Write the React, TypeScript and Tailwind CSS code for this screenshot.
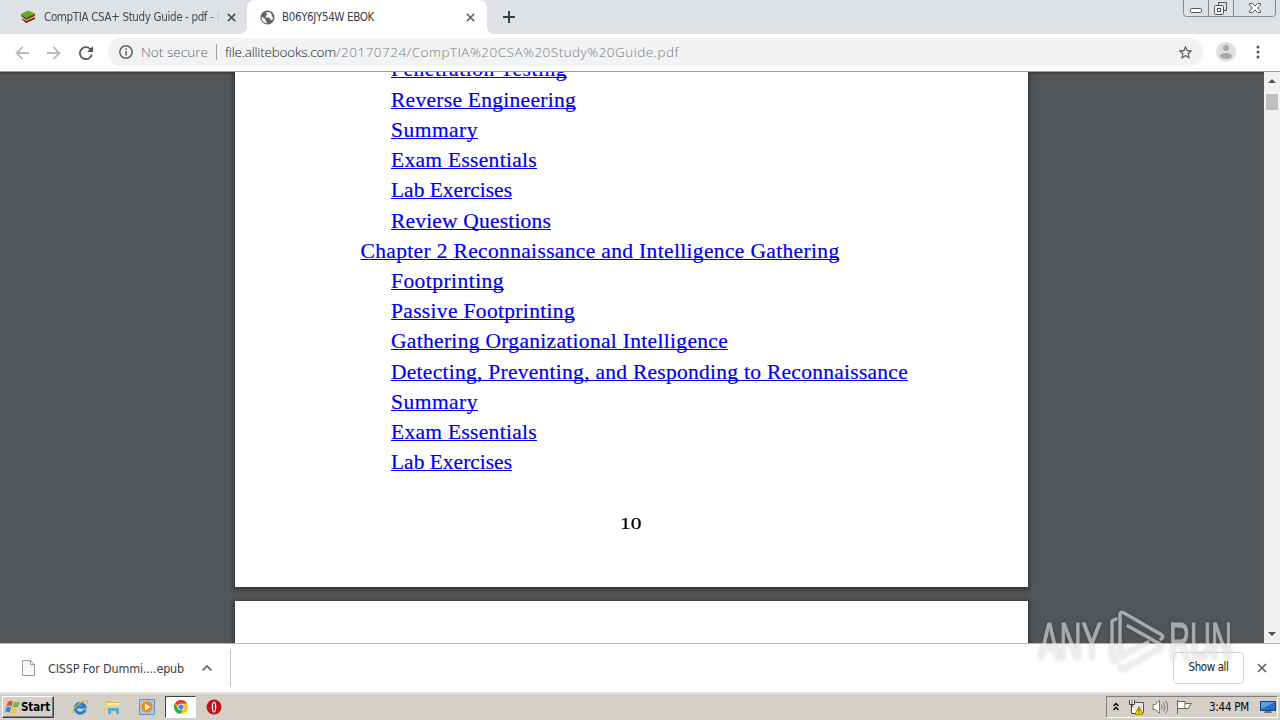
import React, { useLayoutEffect, useRef, useState } from 'react';

interface FitProps {
  text: string;
  width: number;
  className?: string;
}

// Spreads or tightens the letters so the text takes exactly the given width
function Fit({ text, width, className = '' }: FitProps) {
  const ref = useRef<HTMLSpanElement>(null);
  const [spacing, setSpacing] = useState(0);

  useLayoutEffect(() => {
    if (ref.current) {
      setSpacing((width - ref.current.getBoundingClientRect().width) / text.length);
    }
  }, []);

  return (
    <span ref={ref} className={`inline-block whitespace-pre ${className}`} style={{ letterSpacing: spacing }}>
      {text}
    </span>
  );
}

const links = [
  { text: 'Penetration Testing', width: 176 },
  { text: 'Reverse Engineering', width: 185 },
  { text: 'Summary', width: 87 },
  { text: 'Exam Essentials', width: 146 },
  { text: 'Lab Exercises', width: 121 },
  { text: 'Review Questions', width: 160 },
  { text: 'Chapter 2 Reconnaissance and Intelligence Gathering', width: 479, chapter: true },
  { text: 'Footprinting', width: 113 },
  { text: 'Passive Footprinting', width: 184 },
  { text: 'Gathering Organizational Intelligence', width: 337 },
  { text: 'Detecting, Preventing, and Responding to Reconnaissance', width: 517 },
  { text: 'Summary', width: 87 },
  { text: 'Exam Essentials', width: 146 },
  { text: 'Lab Exercises', width: 121 },
];

function Cross({ className }: { className: string }) {
  return (
    <svg viewBox="0 0 10 10" className={className} fill="none" stroke="currentColor" strokeWidth="1.7">
      <path d="M1 1l8 8M9 1L1 9" />
    </svg>
  );
}

function TabStrip() {
  return (
    <div className="flex h-[34px] bg-[#dee1e6]">
      <div className="flex h-full w-[247px] items-center pl-5">
        <svg viewBox="0 0 16 14" className="h-[14px] w-4 shrink-0">
          <path d="M1 8.500l5 4.500 9-4V7L6 10z" fill="#7a1c12" />
          <path d="M1 7l5 4 9-4V5L6 8z" fill="#e8d9b8" />
          <path d="M1 6l5 4 9-4V4L6 7z" fill="#8b2a14" />
          <path d="M1 4l7-3.500 7 3-9 4.500z" fill="#6cab1e" />
          <path d="M1 4v2l5 3 9-4V3.500L6 8z" fill="#3f7a12" />
        </svg>
        <div className="mt-[2px] ml-2 flex w-[176px] overflow-hidden [mask-image:linear-gradient(to_right,#000_93%,transparent)]">
          <Fit text="CompTIA CSA+ Study Guide - pdf - F" width={178} className="shrink-0 font-['DejaVu_Sans_Condensed','DejaVu_Sans',sans-serif] text-[11.500px] text-[#45494d]" />
        </div>
        <Cross className="ml-[7px] h-[9px] w-[9px] text-[#4a4d51]" />
      </div>
      <div className="relative flex h-full w-[240px] items-center rounded-t-lg bg-white pl-[13px]">
        <svg viewBox="0 0 16 16" className="h-[15px] w-[15px]">
          <circle cx="8" cy="8" r="7.500" fill="#5f6368" />
          <path d="M2 7l4 3v2l2 2c-4 .5-7-3-6-7zM6 3l4-1 3 3-1 1 2 2-1 3-2-1V9L9 8H6V6l2-1z" fill="#fff" />
        </svg>
        <Fit text="B06Y6JY54W EBOK" width={92} className="mt-[2px] ml-[7px] font-['DejaVu_Sans_Condensed','DejaVu_Sans',sans-serif] text-[11.500px] text-[#3c4043]" />
        <Cross className="ml-[92px] h-[9px] w-[9px] text-[#5f6368]" />
        <div className="absolute bottom-0 -left-2 h-2 w-2 bg-[radial-gradient(circle_at_0_0,transparent_8px,#fff_8px)]" />
        <div className="absolute -right-2 bottom-0 h-2 w-2 bg-[radial-gradient(circle_at_100%_0,transparent_8px,#fff_8px)]" />
      </div>
      <svg viewBox="0 0 12 12" className="mt-[11px] ml-4 h-3 w-3" stroke="#3c4043" strokeWidth="2">
        <path d="M6 0v12M0 6h12" />
      </svg>
      <svg viewBox="0 0 93 17" className="ml-auto mr-1 h-[17px] w-[93px]" fill="none" stroke="#84898f">
        <path d="M.5 0v13.500q0 3 3 3h86q3 0 3-3V0M25.500 0v16M50.500 0v16" />
        <rect x="7.500" y="8.500" width="11" height="4" rx="1" stroke="#50545b" fill="#fff" />
        <path d="M35.500 5V2.500h8v8H41" stroke="#50545b" />
        <rect x="31.500" y="5.500" width="9" height="9" rx="1" stroke="#50545b" fill="#f1f2f4" />
        <rect x="34.500" y="8.500" width="3" height="3" stroke="#50545b" />
        <path d="M66.500 3.500h3l2.500 2.500 2.500-2.500h3v1.500L74.500 8l3 3v1.500h-3L72 10l-2.500 2.500h-3V11l3-3-3-3z" stroke="#50545b" fill="#fff" />
      </svg>
    </div>
  );
}

function Toolbar() {
  return (
    <div className="flex h-[38px] items-center border-b border-[#9b9b9b] bg-white">
      <div className="flex items-center pl-[15px]">
        <svg viewBox="0 0 14 14" className="h-[14px] w-[14px]" fill="none" stroke="#babcbe" strokeWidth="1.800">
          <path d="M14 7H1.500M7.500 1l-6 6 6 6" />
        </svg>
        <svg viewBox="0 0 14 14" className="ml-[18px] h-[14px] w-[14px]" fill="none" stroke="#babcbe" strokeWidth="1.800">
          <path d="M0 7h12.500M6.500 1l6 6-6 6" />
        </svg>
        <svg viewBox="0 0 14 14" className="ml-[18px] h-[14px] w-[14px]" fill="none" stroke="#54585c" strokeWidth="1.800">
          <path d="M12.800 8.500A6 6 0 1 1 11 2.700l1.500 1.500" />
          <path d="M14 0v6H8z" fill="#54585c" stroke="none" />
        </svg>
      </div>
      <div className="-mt-px ml-[15px] flex h-7 w-[1095px] items-center rounded-full bg-[#f1f3f4] pl-[11px] font-['Open_Sans','Noto_Sans',sans-serif] text-[13.500px] font-light">
        <svg viewBox="0 0 14 14" className="h-[14px] w-[14px]" fill="none" stroke="#5f6368" strokeWidth="1.500">
          <circle cx="7" cy="7" r="6.200" />
          <path d="M7 6v4.500M7 3.300v1.500" />
        </svg>
        <Fit text="Not secure" width={67} className="ml-2 text-[#5f6368]" />
        <div className="mx-2 h-4 w-px bg-[#9aa0a6]" />
        <Fit text="file.allitebooks.com" width={111} className="text-[#202124]" />
        <Fit text="/20170724/CompTIA%20CSA%20Study%20Guide.pdf" width={343} className="text-[#777c81]" />
        <svg viewBox="0 0 24 24" className="ml-auto mr-[9px] h-[17px] w-[17px]" fill="#54585c">
          <path d="M22 9.240l-7.190-.62L12 2 9.190 8.630 2 9.240l5.460 4.730L5.820 21 12 17.270 18.180 21l-1.630-7.030zM12 15.400l-3.760 2.270 1-4.280-3.320-2.880 4.380-.38L12 6.100l1.710 4.040 4.380.38-3.320 2.880 1 4.280z" />
        </svg>
      </div>
      <svg viewBox="0 0 20 20" className="-mt-px ml-[13px] h-5 w-5">
        <circle cx="10" cy="10" r="10" fill="#dedfe0" />
        <circle cx="10" cy="6" r="3" fill="#a5a7a9" />
        <ellipse cx="10" cy="14" rx="6" ry="3" fill="#a5a7a9" />
      </svg>
      <svg viewBox="0 0 4 14" className="-mt-px ml-5 h-[14px] w-1" fill="#54585c">
        <circle cx="2" cy="2" r="1.500" />
        <circle cx="2" cy="7" r="1.500" />
        <circle cx="2" cy="12" r="1.500" />
      </svg>
    </div>
  );
}

function Viewer() {
  return (
    <div className="flex h-[571px] bg-[#525659]">
      <div className="flex flex-1 flex-col overflow-hidden pl-[235px] shadow-[inset_0_4px_3px_-3px_rgba(0,0,0,0.4)]">
        <div className="h-[515px] w-[793px] shrink-0 overflow-hidden bg-white shadow-[0_1px_4px_2px_rgba(0,0,0,0.35)]">
          <div className="-mt-[17.600px] font-['Liberation_Serif',serif] text-[21.500px] leading-[30.230px]">
            {links.map((link, i) => (
              <div key={i} className={`h-[30.230px] ${link.chapter ? 'pl-[125.500px]' : 'pl-[156px]'}`}>
                <a className="text-[#0000ee] [-webkit-text-stroke:0.200px_#0000ee]">
                  <Fit text={link.text} width={link.width} className="underline decoration-1 underline-offset-1 [text-decoration-skip-ink:none]" />
                </a>
              </div>
            ))}
            <div className="mt-[32px] ml-[385px] w-4 origin-left scale-x-135 text-[16px] leading-[30px] text-black [-webkit-text-stroke:0.200px_#000]">
              10
            </div>
          </div>
        </div>
        <div className="mt-[14px] h-[60px] w-[793px] shrink-0 bg-white shadow-[0_1px_4px_2px_rgba(0,0,0,0.35)]" />
      </div>
      <div className="flex w-4 flex-col items-center bg-[#f1f1f1]">
        <svg viewBox="0 0 8 4" className="mt-[7px] h-1 w-2" fill="#505050">
          <path d="M0 4l4-4 4 4z" />
        </svg>
        <div className="mt-[11px] h-4 w-3 bg-[#c1c1c1]" />
        <svg viewBox="0 0 8 4" className="mt-auto mb-[7px] h-1 w-2" fill="#505050">
          <path d="M0 0l4 4 4-4z" />
        </svg>
      </div>
    </div>
  );
}

function DownloadShelf() {
  return (
    <div className="flex h-[49px] items-center border-t border-[#b5b5b5] bg-white font-['DejaVu_Sans_Condensed','DejaVu_Sans',sans-serif]">
      <div className="flex h-[38px] w-[231px] items-center border-r border-[#c8c8c8] pl-[22px]">
        <svg viewBox="0 0 13 16" className="-mt-px h-4 w-[13px]" fill="#f8f8f8" stroke="#9a9a9a">
          <path d="M.5.5h8l4 4v11H.5zM8.500.5v4h4" />
        </svg>
        <Fit text="CISSP For Dummi....epub" width={136} className="mt-[3px] ml-[13px] text-[12.500px] text-[#3c4043]" />
        <svg viewBox="0 0 10 6" className="ml-[18px] h-[6px] w-[10px]" fill="none" stroke="#6b6e72" strokeWidth="1.800">
          <path d="M.5 5.500L5 1l4.500 4.500" />
        </svg>
      </div>
      <div className="ml-auto flex h-8 w-[71px] items-center justify-center rounded border border-[#d5d7da] bg-white">
        <Fit text="Show all" width={40} className="text-[11.500px] text-[#202124]" />
      </div>
      <Cross className="mr-[13px] ml-[13px] h-[10px] w-[10px] text-[#5f6368]" />
    </div>
  );
}

function Taskbar() {
  return (
    <div className="flex h-[28px] items-center border-t-2 border-t-[#e4e1dc] bg-[#d4d0c8] font-['DejaVu_Sans_Condensed','DejaVu_Sans',sans-serif]">
      <div className="ml-[2px] flex h-[22px] w-[52px] items-center border border-t-white border-r-[#404040] border-b-[#404040] border-l-white pl-[2px] shadow-[inset_-1px_-1px_0_#808080]">
        <svg viewBox="0 0 16 16" className="h-[15px] w-[15px] shrink-0">
          <path d="M3 2q3-2 5.500-.5L7 7Q4.500 5.500 1.500 7z" fill="#e8522a" />
          <path d="M9.500 2q3 1 6 0L14 7.500q-3 1-6 0z" fill="#71b943" />
          <path d="M1.200 8Q4 6.500 6.700 8L5 13.500Q3 12 0 13z" fill="#3a88d8" />
          <path d="M7.500 8.500q3 1.500 6 .3L12 14q-3 1.500-6-.5z" fill="#fbc62d" />
        </svg>
        <Fit text="Start" width={29} className="mt-px ml-px text-[11.500px] font-bold text-black" />
      </div>
      <svg viewBox="0 0 16 16" className="ml-[18px] h-4 w-4" fill="none">
        <path d="M13 10.500A5 5 0 1 1 13 8H4" stroke="#1c7fd0" strokeWidth="3" />
        <path d="M1 14C-1 11 10 0 15 2q1 1-.5 3.500" stroke="#e5ba35" strokeWidth="1.300" />
      </svg>
      <svg viewBox="0 0 16 16" className="ml-[17px] h-4 w-4">
        <path d="M1 2h5l1 1h7v11H1z" fill="#e0bd50" />
        <path d="M2 4h12v3H2z" fill="#fff4b8" />
        <path d="M1 6h14v8H1z" fill="#f0d678" />
        <path d="M3 15V9h11v6h-3v-3H6v3z" fill="#58a9df" />
      </svg>
      <svg viewBox="0 0 16 16" className="ml-[18px] h-4 w-4">
        <path d="M.5.5h15v15H.5z" fill="#a8cbec" stroke="#5b94c9" />
        <circle cx="8" cy="8" r="5.800" fill="#f18b16" />
        <path d="M6 4.500v7L11.500 8z" fill="#fff" />
      </svg>
      <div className="ml-[10px] flex h-[22px] w-[31px] items-center justify-center border border-t-[#404040] border-r-white border-b-white border-l-[#404040] bg-white">
        <svg viewBox="0 0 16 16" className="h-[14px] w-[14px]">
          <circle cx="8" cy="8" r="8" fill="#fbc116" />
          <path d="M8 8L1.070 4A8 8 0 0 1 14.930 4H8z" fill="#e33b2e" />
          <path d="M1.070 4A8 8 0 0 0 7 15.940L10.500 10 8 8 4.500 10z" fill="#2da94f" />
          <circle cx="8" cy="8" r="3.800" fill="#fff" />
          <circle cx="8" cy="8" r="3" fill="#4285f4" />
        </svg>
      </div>
      <svg viewBox="0 0 16 16" className="ml-[10px] h-4 w-4">
        <circle cx="8" cy="8" r="7.500" fill="#bd1017" />
        <ellipse cx="8" cy="8" rx="2.300" ry="5.500" fill="#fff" />
        <ellipse cx="8" cy="8" rx=".9" ry="4.500" fill="#9d0b12" />
      </svg>
      <div className="ml-auto mr-[2px] flex h-[22px] w-[172px] items-center border border-t-[#808080] border-r-white border-b-white border-l-[#808080]">
        <svg viewBox="0 0 6 9" className="-mt-[2px] ml-[6px] h-[9px] w-[6px]" fill="none" stroke="#000" strokeWidth="1.400">
          <path d="M.5 4L3 1.500 5.500 4M.5 8L3 5.500 5.500 8" />
        </svg>
        <svg viewBox="0 0 16 15" className="ml-[9px] h-[15px] w-4">
          <path d="M4.500 2.500h11v10h-11z" fill="#e8e8e8" stroke="#555" />
          <path d="M1.500 0v4.500h5V0M4 0v4M3.500 5v8.500H8" fill="#fff" stroke="#444" />
          <path d="M11 6.500l4 8H7z" fill="#ffe100" stroke="#a89000" />
          <path d="M11 9v2.500M11 12.500v1" stroke="#222" />
        </svg>
        <svg viewBox="0 0 17 14" className="ml-[8px] h-[14px] w-[17px]" fill="none" stroke="#777">
          <path d="M1 4.500h2.500l4-4v13l-4-4H1z" fill="#fff" />
          <path d="M9.500 4.500q1.500 2.500 0 5M11.500 2.500q3 4.500 0 9M13.500.5q4.500 6.500 0 13" />
        </svg>
        <svg viewBox="0 0 17 14" className="ml-[7px] h-[14px] w-[17px]" fill="#fff" stroke="#666">
          <path d="M1.500 0v14M2 1.500h7v7H2M9 3.500h6.500q-2.500 2-3 5H9" />
        </svg>
        <Fit text="3:44 PM" width={40} className="mt-px ml-4 text-[11.500px] text-black" />
        <svg viewBox="0 0 16 14" className="ml-[11px] h-[14px] w-4">
          <path d="M.5 1.500h15v9H.5z" fill="#2270ce" stroke="#173c73" />
          <path d="M1 2h14L1 9z" fill="#5ba0e8" />
          <path d="M5 11h6l1 2H4z" fill="#6a7482" />
        </svg>
      </div>
    </div>
  );
}

function Watermark() {
  return (
    <svg viewBox="0 0 200 66" className="pointer-events-none absolute top-[607px] left-[1036px] h-[66px] w-[200px] opacity-60 drop-shadow-[0_0_2px_rgba(0,0,0,0.3)]">
      <g className="font-['Liberation_Sans_Narrow','Liberation_Sans',sans-serif]" fontSize="52" fill="#e2e2e2" stroke="#e2e2e2" strokeWidth="1.2">
        <text x="3" y="52" textLength="63" lengthAdjust="spacingAndGlyphs">ANY</text>
        <text x="133" y="52" textLength="63" lengthAdjust="spacingAndGlyphs">RUN</text>
      </g>
      <g fill="none" stroke="#e2e2e2" strokeWidth="3.5" strokeLinejoin="round" strokeLinecap="round">
        <path d="M80 12l-4 2v38l4 2" />
        <path d="M84 50V7q1-3 4-1l38 22q2 2-1 4" />
        <path d="M92 19l32 18q3 2 0 4L88 62q-3 1-4-3" />
        <path d="M84 50l28-15" />
      </g>
    </svg>
  );
}

export default function App() {
  return (
    <div className="relative flex h-[720px] w-[1280px] flex-col overflow-hidden">
      <TabStrip />
      <Toolbar />
      <Viewer />
      <DownloadShelf />
      <Taskbar />
      <Watermark />
    </div>
  );
}
